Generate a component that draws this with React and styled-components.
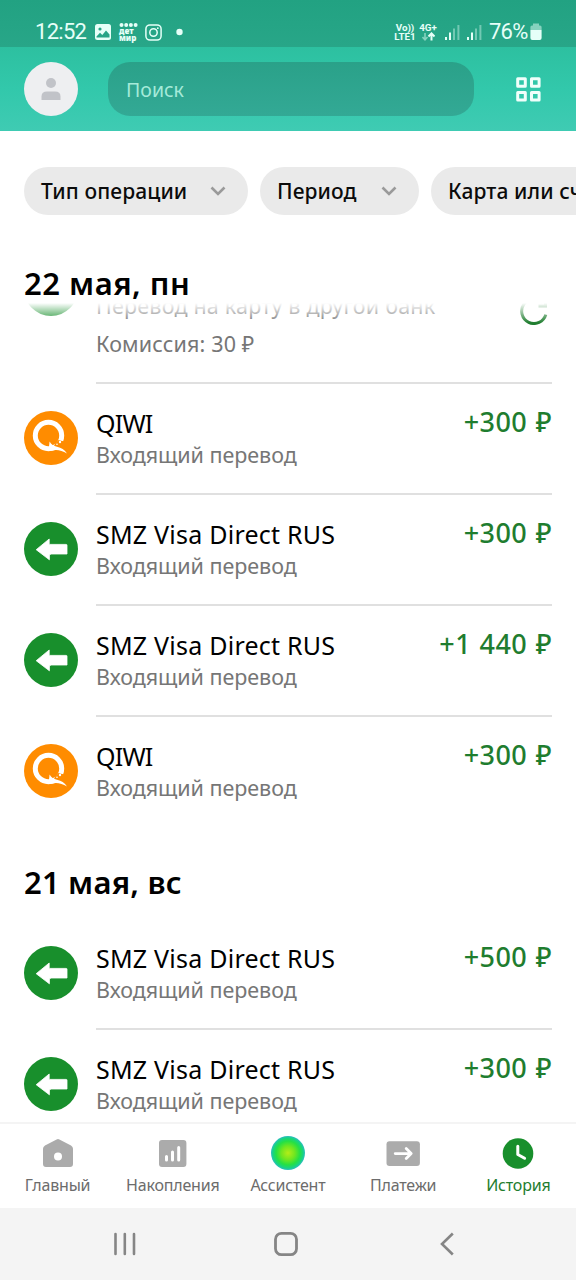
// Package Imports
import React from 'react';
import styled, { createGlobalStyle } from 'styled-components';

const GlobalStyle = createGlobalStyle`
	* {
		box-sizing: border-box;
	}

	body {
		margin: 0;
		background: #ffffff;
		font-family: 'Noto Sans', 'Open Sans', sans-serif;
	}
`;

const Screen = styled.div`
	width: 576px;
	height: 1280px;
	display: flex;
	flex-direction: column;
	overflow: hidden;
	background: #ffffff;
`;

const StatusBar = styled.div`
	height: 47px;
	flex: none;
	display: flex;
	align-items: flex-start;
	justify-content: space-between;
	padding: 18px 34px 0 35px;
	background: linear-gradient(180deg, #22a282 0%, #28a688 100%);
	color: #e6fff8;
	font-family: Roboto, sans-serif;

	> div {
		display: flex;
		align-items: center;
		height: 28px;
	}
`;

const Clock = styled.span`
	font-size: 22px;
	line-height: 28px;
	width: 60px;
	letter-spacing: -0.7px;
	white-space: nowrap;
`;

const DetMir = styled.span`
	width: 19px;
	margin: 0 7px 0 8px;
	font-family: 'Noto Sans', sans-serif;
	font-size: 8px;
	font-weight: 900;
	line-height: 7px;

	> svg {
		display: block;
	}
`;

const Network = styled.span`
	width: ${({ $width }) => $width}px;
	font-size: 9.8px;
	font-weight: 700;
	line-height: 9px;
	text-align: center;
	white-space: nowrap;

	> svg {
		display: block;
		margin: 0 auto;
	}
`;

const Signals = styled.span`
	display: flex;
	gap: 7px;
	margin: 0 7px 0 5px;
`;

const Battery = styled.span`
	width: 41px;
	font-size: 22px;
	line-height: 28px;
	letter-spacing: -0.8px;
	white-space: nowrap;
`;

const Header = styled.div`
	height: 84px;
	flex: none;
	display: flex;
	align-items: center;
	padding: 0 35px 0 24px;
	background: linear-gradient(180deg, #2dc0a0 0%, #32c8ab 50%, #3fcbb3 100%);
`;

const Avatar = styled.div`
	width: 54px;
	height: 54px;
	border-radius: 50%;
	background: #eeeff1;
	display: flex;
	align-items: center;
	justify-content: center;
`;

const Search = styled.div`
	width: 366px;
	height: 54px;
	margin: 0 42px 0 30px;
	padding-left: 18px;
	border-radius: 22px;
	background: linear-gradient(180deg, #2aa189, #33a995);
	color: #a5ead9;
	font-size: 19.5px;
	line-height: 55px;
`;

const Filters = styled.div`
	flex: none;
	display: flex;
	gap: 12px;
	padding: 36px 0 0 24px;
	overflow: hidden;
`;

const FilterPill = styled.div`
	width: ${({ $width }) => $width}px;
	height: 48px;
	flex: none;
	display: flex;
	align-items: center;
	justify-content: space-between;
	padding: 0 22px 1px 17px;
	border-radius: 24px;
	background: #eaeaea;
	color: #0b0b0b;
	font-size: 21px;
	font-weight: 500;
	letter-spacing: 0.1px;
	white-space: nowrap;
`;

const DayTitle = styled.div`
	flex: none;
	height: 44px;
	padding-left: 24px;
	color: #000000;
	font-size: 31px;
	font-weight: 600;
	line-height: 44px;
	letter-spacing: 0.2px;
`;

const StickyDay = styled(DayTitle)`
	margin-top: 44px;
	line-height: 48px;
	letter-spacing: 0.5px;
`;

const List = styled.div`
	flex: 1;
	min-height: 0;
	position: relative;
	overflow: hidden;

	&::before {
		content: '';
		position: absolute;
		z-index: 1;
		top: 0;
		left: 0;
		right: 0;
		height: 20px;
		background: linear-gradient(180deg, #ffffff 0%, rgba(255, 255, 255, 0) 100%);
	}
`;

const Scrolled = styled.div`
	margin-top: -68px;

	> ${DayTitle} {
		margin: 32px 0 15px;
	}
`;

const Row = styled.div`
	height: ${({ $tall }) => ($tall ? 149 : 111)}px;
	display: flex;
	padding: 0 24px;
`;

const RowIcon = styled.div`
	width: 54px;
	height: 54px;
	margin: 27px 18px 0 0;
	flex: none;

	> svg {
		display: block;
	}
`;

const RowBody = styled.div`
	flex: 1;
	display: flex;
	justify-content: space-between;
	padding-top: 22px;
	border-bottom: 2px solid ${({ $last }) => ($last ? 'transparent' : '#e0e0e0')};
`;

const Name = styled.div`
	height: 32px;
	margin-top: 1px;
	color: #000000;
	font-size: 25px;
	line-height: 32px;
	letter-spacing: ${({ $tight }) => ($tight ? '-0.8px' : '0.23px')};
	white-space: nowrap;
`;

const Note = styled.div`
	margin-top: ${({ $gap }) => $gap || 1}px;
	color: #767676;
	font-size: 21.5px;
	line-height: 30px;
	letter-spacing: ${({ $spacing }) => $spacing || -0.05}px;
	white-space: nowrap;
`;

const Amount = styled.div`
	color: #1f7d2f;
	font-size: 27px;
	font-weight: 500;
	line-height: 32px;
	letter-spacing: 0.45px;
	word-spacing: 1px;
	white-space: nowrap;
`;

const Pending = styled.div`
	margin: 40px 4px 0 0;
`;

const TabBar = styled.div`
	height: 86px;
	flex: none;
	display: flex;
	border-top: 2px solid #f4f4f4;
	background: #ffffff;
`;

const Tab = styled.div`
	width: 115.2px;
	display: flex;
	flex-direction: column;
	align-items: center;
	color: ${({ $active }) => ($active ? '#1f7d2f' : '#6c6c6c')};
	font-size: 16px;
	line-height: 23px;
	letter-spacing: -0.2px;
	white-space: nowrap;

	> svg {
		margin: 12px 0 4px;
	}
`;

const SystemBar = styled.div`
	height: 72px;
	flex: none;
	background: #f4f4f4;
	display: flex;
	align-items: center;
	padding-left: 112px;
	gap: 134px;
`;

const ChevronDown = () => (
	<svg width='16' height='10' viewBox='0 0 16 10' fill='none'>
		<path d='M1.5 1.5 L8 8 L14.5 1.5' stroke='#9a9a9a' strokeWidth='2.6' />
	</svg>
);

const PictureIcon = () => (
	<svg width='16' height='16' viewBox='0 0 16 16'>
		<rect width='16' height='16' rx='2.5' fill='#e6fff8' />
		<circle cx='5' cy='5' r='1.6' fill='#26a486' />
		<path d='M1.5 12.5 L5 8.8 L7.3 11 L11 6.5 L14.5 10.5 V13.5 H1.5 Z' fill='#26a486' />
	</svg>
);

const CameraIcon = () => (
	<svg width='17' height='17' viewBox='0 0 17 17' fill='none' stroke='#e6fff8' strokeWidth='1.5'>
		<rect x='0.9' y='0.9' width='15.2' height='15.2' rx='4' />
		<circle cx='8.5' cy='8.5' r='3.7' />
		<circle cx='12.8' cy='4.2' r='0.9' fill='#e6fff8' stroke='none' />
	</svg>
);

const SignalIcon = () => (
	<svg width='15' height='17' viewBox='0 0 15 17' fill='#e6fff8'>
		<rect x='0' y='13' width='2' height='3' />
		<rect x='4' y='8.5' width='2' height='7.5' />
		<rect x='8' y='4.5' width='2' height='11.5' opacity='0.4' />
		<rect x='12.4' y='1' width='2' height='15' opacity='0.4' />
	</svg>
);

const BatteryIcon = () => (
	<svg width='12' height='18' viewBox='0 0 12 18' fill='#e6fff8'>
		<path d='M3 0.5 H9 V2.5 H10 Q11.6 2.5 11.6 4 V7 H0.4 V4 Q0.4 2.5 2 2.5 H3 Z' opacity='0.5' />
		<path d='M0.4 7 H11.6 V15 Q11.6 17 9.6 17 H2.4 Q0.4 17 0.4 15 Z' />
	</svg>
);

const PersonIcon = () => (
	<svg width='20' height='23' viewBox='0 0 20 23' fill='#c1c3c8'>
		<circle cx='10' cy='5' r='5' />
		<path d='M0.5 22 V18.5 Q0.5 13.5 6 13.5 H14 Q19.5 13.5 19.5 18.5 V22 Z' />
	</svg>
);

const GridIcon = () => (
	<svg width='25' height='25' viewBox='0 0 25 25' fill='none' stroke='#f0fffb' strokeWidth='3' strokeLinejoin='round'>
		<rect x='1.7' y='1.7' width='7.6' height='7.6' />
		<rect x='15.5' y='1.7' width='7.6' height='7.6' />
		<rect x='1.7' y='15.5' width='7.6' height='7.6' />
		<rect x='15.5' y='15.5' width='7.6' height='7.6' />
	</svg>
);

const QiwiIcon = () => (
	<svg width='54' height='54' viewBox='0 0 54 54'>
		<circle cx='27' cy='27' r='27' fill='#ff8c00' />
		<circle cx='24.5' cy='24.5' r='13.2' fill='none' stroke='#ffffff' strokeWidth='5' />
		<path d='M34.5 29 L37 29.8 L39.5 30.2 L42 34 L36 40 L30 35 L31 32.5 Z' fill='#ff8c00' />
		<path d='M25.6 30.6 Q28 34.8 33 35.8 Q39.5 37 43 42.6 Q37 38.8 31.5 39 Q28.5 40 24.5 40 Z' fill='#ffffff' />
		<circle cx='36' cy='31' r='1.2' fill='#ffffff' />
		<circle cx='33' cy='33.2' r='0.8' fill='#ffffff' />
	</svg>
);

const IncomingIcon = () => (
	<svg width='54' height='54' viewBox='0 0 54 54'>
		<circle cx='27' cy='27' r='27' fill='#188f2c' />
		<path d='M12.2 27.7 L25.2 17 V22.4 H42.2 Q43 22.4 43 23.2 V32 H27 L25.4 33 V37.8 Z' fill='#ffffff' stroke='#ffffff' strokeWidth='0.8' strokeLinejoin='round' />
	</svg>
);

const OutgoingIcon = () => (
	<svg width='54' height='54' viewBox='0 0 54 54'>
		<circle cx='27' cy='27' r='27' fill='#188f2c' />
	</svg>
);

const PendingIcon = () => (
	<svg width='28' height='28' viewBox='0 0 28 28' fill='none' stroke='#1f7d2f' strokeWidth='3'>
		<path d='M25.8 17.6 A12.3 12.3 0 1 1 22.5 5.3' />
		<path d='M25.5 2 V9 H18.5' />
	</svg>
);

const HomeIcon = () => (
	<svg width='32' height='34' viewBox='0 0 32 34'>
		<path d='M14.6 3.4 Q16 2.6 17.4 3.4 L29 9.4 Q31 10.5 31 12.8 V28 Q31 31 28 31 H4 Q1 31 1 28 V12.8 Q1 10.5 3 9.4 Z' fill='#ababab' />
		<circle cx='16' cy='20.4' r='4' fill='#ffffff' />
	</svg>
);

const SavingsIcon = () => (
	<svg width='32' height='34' viewBox='0 0 32 34'>
		<rect x='2' y='4' width='27.4' height='27' rx='3' fill='#ababab' />
		<path d='M9.5 24 V20.5 M15.5 24 V16 M21.7 24 V11.5' stroke='#ffffff' strokeWidth='3' strokeLinecap='round' />
	</svg>
);

const AssistantIcon = () => (
	<svg width='34' height='34' viewBox='0 0 34 34'>
		<defs>
			<radialGradient id='assistant'>
				<stop offset='0' stopColor='#b4ec18' />
				<stop offset='0.4' stopColor='#70e620' />
				<stop offset='0.7' stopColor='#25e044' />
				<stop offset='0.88' stopColor='#18d480' />
				<stop offset='1' stopColor='#2cbcc0' />
			</radialGradient>
		</defs>
		<circle cx='17' cy='17' r='17' fill='url(#assistant)' />
	</svg>
);

const PaymentsIcon = () => (
	<svg width='34' height='34' viewBox='0 0 34 34'>
		<rect x='0.5' y='5.2' width='33.4' height='24.8' rx='3' fill='#ababab' />
		<path d='M9.2 17.6 H25 M20.2 12.6 L25.2 17.6 L20.2 22.6' fill='none' stroke='#ffffff' strokeWidth='2.8' strokeLinecap='round' strokeLinejoin='round' />
	</svg>
);

const HistoryIcon = () => (
	<svg width='32' height='34' viewBox='0 0 32 34'>
		<circle cx='16' cy='17.5' r='15.3' fill='#188f2c' />
		<path d='M15.8 10.3 V18.5 L22.6 22.3' fill='none' stroke='#ffffff' strokeWidth='3' strokeLinecap='round' strokeLinejoin='round' />
	</svg>
);

const Transaction = ({ name, amount, last }) => (
	<Row>
		<RowIcon>{name === 'QIWI' ? <QiwiIcon /> : <IncomingIcon />}</RowIcon>
		<RowBody $last={last}>
			<div>
				<Name $tight={name === 'QIWI'}>{name}</Name>
				<Note>Входящий перевод</Note>
			</div>
			<Amount>{amount} ₽</Amount>
		</RowBody>
	</Row>
);

const may22 = [
	{ name: 'QIWI', amount: '+300' },
	{ name: 'SMZ Visa Direct RUS', amount: '+300' },
	{ name: 'SMZ Visa Direct RUS', amount: '+1 440' },
	{ name: 'QIWI', amount: '+300' },
];

const may21 = [
	{ name: 'SMZ Visa Direct RUS', amount: '+500' },
	{ name: 'SMZ Visa Direct RUS', amount: '+300' },
];

const App = () => {
	return (
		<Screen>
			<GlobalStyle />
			<StatusBar>
				<div>
					<Clock>12:52</Clock>
					<PictureIcon />
					<DetMir>
						<svg width='19' height='4' viewBox='0 0 19 4' fill='#e6fff8'>
							<circle cx='2.5' cy='2' r='2' />
							<circle cx='7.2' cy='2' r='2' />
							<circle cx='11.9' cy='2' r='2' />
							<circle cx='16.6' cy='2' r='2' />
						</svg>
						дет<br />мир
					</DetMir>
					<CameraIcon />
					<svg width='22' height='8' viewBox='0 0 22 8' fill='#e6fff8'>
						<circle cx='17.5' cy='4' r='3.2' />
					</svg>
				</div>
				<div>
					<Network $width={22}>Vo))<br />LTE1</Network>
					<Network $width={24}>
						4G+
						<svg width='13' height='9' viewBox='0 0 13 9' fill='none' stroke='#e6fff8' strokeWidth='1.6'>
							<path d='M3 1 V7.5 M0.5 5 L3 7.8 L5.5 5' opacity='0.5' />
							<path d='M9.5 8.5 V1.5 M6.5 4.5 L9.5 1.4 L12.5 4.5' strokeWidth='2' />
						</svg>
					</Network>
					<Signals>
						<SignalIcon />
						<SignalIcon />
					</Signals>
					<Battery>76%</Battery>
					<BatteryIcon />
				</div>
			</StatusBar>
			<Header>
				<Avatar><PersonIcon /></Avatar>
				<Search>Поиск</Search>
				<GridIcon />
			</Header>
			<Filters>
				<FilterPill $width={224}>Тип операции<ChevronDown /></FilterPill>
				<FilterPill $width={159}>Период<ChevronDown /></FilterPill>
				<FilterPill $width={210}>Карта или счёт<ChevronDown /></FilterPill>
			</Filters>
			<StickyDay>22 мая, пн</StickyDay>
			<List>
				<Scrolled>
					<Row $tall>
						<RowIcon><OutgoingIcon /></RowIcon>
						<RowBody>
							<div>
								<Name />
								<Note $spacing={0.2}>Перевод на карту в другой банк</Note>
								<Note $gap={8} $spacing={0.15}>Комиссия: 30 ₽</Note>
							</div>
							<Pending><PendingIcon /></Pending>
						</RowBody>
					</Row>
					{may22.map((item, idx) => (
						<Transaction key={idx} {...item} last={idx === may22.length - 1} />
					))}
					<DayTitle>21 мая, вс</DayTitle>
					{may21.map((item, idx) => (
						<Transaction key={idx} {...item} />
					))}
				</Scrolled>
			</List>
			<TabBar>
				<Tab><HomeIcon />Главный</Tab>
				<Tab><SavingsIcon />Накопления</Tab>
				<Tab><AssistantIcon />Ассистент</Tab>
				<Tab><PaymentsIcon />Платежи</Tab>
				<Tab $active><HistoryIcon />История</Tab>
			</TabBar>
			<SystemBar>
				<svg width='26' height='26' viewBox='0 0 26 26' stroke='#858585' strokeWidth='2.6' strokeLinecap='round'>
					<path d='M3.5 3 V23 M12.8 3 V23 M22 3 V23' />
				</svg>
				<svg width='28' height='26' viewBox='0 0 28 26' fill='none' stroke='#858585' strokeWidth='2.8'>
					<rect x='3.5' y='2.3' width='21' height='21.4' rx='6' />
				</svg>
				<svg width='26' height='26' viewBox='0 0 26 26' fill='none' stroke='#858585' strokeWidth='2.6'>
					<path d='M18.8 2.5 L8 13 L18.8 23.5' />
				</svg>
			</SystemBar>
		</Screen>
	);
};

export default App;
